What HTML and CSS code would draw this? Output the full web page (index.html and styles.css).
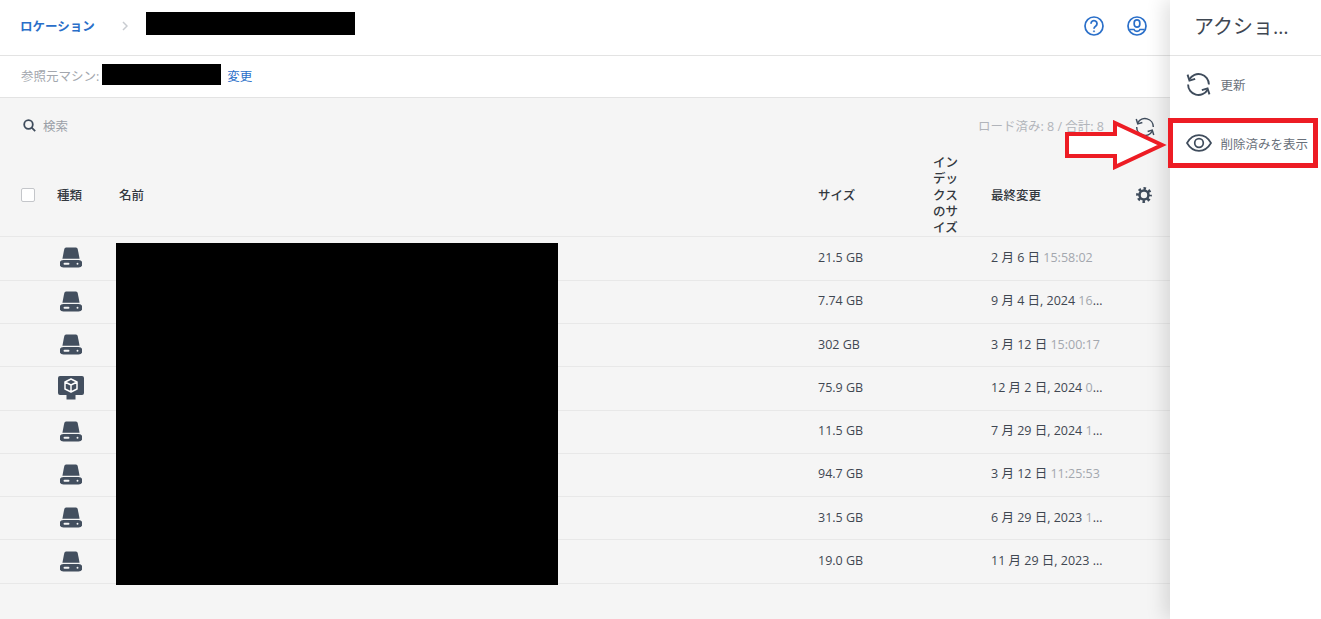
FILE: index.html
```html
<!DOCTYPE html>
<html lang="ja">
<head>
    <meta charset="utf-8">
    <title>ロケーション</title>
    <link rel="stylesheet" href="styles.css">
</head>
<body>
    <svg class="sprites" width="0" height="0">
        <symbol id="i-drive" viewBox="0 0 22 22">
            <path d="M4.300 2Q4.600.5 6 .5h10q1.400 0 1.700 1.500L19.600 11.700H2.400z"/>
            <path fill-rule="evenodd" d="M3.400 13h15.200a3.700 3.700 0 0 1 0 7.500H3.400a3.700 3.700 0 0 1 0-7.500zM4.500 15.800a.9.900 0 0 0 0 1.900h4a.9.900 0 0 0 0-1.900zm13 0a.9.900 0 1 0 0 1.900.9.900 0 0 0 0-1.900z"/>
        </symbol>
        <symbol id="i-vm" viewBox="0 0 26 24">
            <path d="M2 0h22a2 2 0 0 1 2 2v15a2 2 0 0 1-2 2h-6.500v4.500h-9V19H2a2 2 0 0 1-2-2V2a2 2 0 0 1 2-2z"/>
            <path d="M13 3l6 3v7l-6 3-6-3V6zM7 6l6 3 6-3M13 9v7" fill="none" stroke="#fff" stroke-width="1.500" stroke-linejoin="round"/>
        </symbol>
        <symbol id="i-sync" viewBox="0 0 24 24">
            <g fill="none" stroke="currentColor" stroke-width="1.800">
                <path d="M22 12A10 10 0 0 0 3.300 7"/>
                <path d="M1.500 2.500L3.300 8.300 8.800 6.500"/>
                <path d="M2 12A10 10 0 0 0 20.700 17"/>
                <path d="M22.500 21.500L20.700 15.700 15.200 17.500"/>
            </g>
        </symbol>
    </svg>

    <div class="main">
        <div class="topbar">
            <a class="crumb">ロケーション</a>
            <svg class="chevron" width="6" height="10" viewBox="0 0 6 10"><path d="M1 1l4 4-4 4" fill="none" stroke="#c9ccd1" stroke-width="1.500"/></svg>
            <span class="redact redact-crumb"></span>
            <div class="top-icons">
                <svg width="20" height="20" viewBox="0 0 20 20" fill="none" stroke="#2a6fc9" stroke-width="1.700">
                    <circle cx="10" cy="10" r="9"/>
                    <path d="M7 7.700a3 3 0 1 1 4.600 2.500c-1.100.7-1.600 1.200-1.600 2.500" stroke-width="1.800"/>
                    <circle cx="10" cy="15.300" r=".6" stroke-width="1"/>
                </svg>
                <svg width="20" height="20" viewBox="0 0 20 20" fill="none" stroke="#2a6fc9" stroke-width="1.700">
                    <circle cx="10" cy="10" r="9"/>
                    <rect x="7.200" y="3.900" width="5.600" height="7.200" rx="2.800"/>
                    <path d="M2.500 13.500h4.500c.5 1.300 1.500 1.800 3 1.800s2.500-.5 3-1.800h4.500"/>
                </svg>
            </div>
        </div>

        <div class="subbar">
            <span class="muted">参照元マシン:</span>
            <span class="redact redact-machine"></span>
            <a class="link">変更</a>
        </div>

        <div class="toolbar">
            <svg width="13" height="13" viewBox="0 0 13 13" fill="none" stroke="#3f4c5c" stroke-width="1.800"><circle cx="5.500" cy="5.500" r="4.300"/><path d="M8.700 8.700l3.500 3.500"/></svg>
            <span class="search-label">検索</span>
            <span class="loaded">ロード済み: 8 / 合計: 8</span>
            <svg class="sync-small"><use href="#i-sync"/></svg>
        </div>

        <div class="table">
            <div class="row head">
                <div class="cell"><span class="checkbox"></span></div>
                <div class="cell">種類</div>
                <div class="cell">名前</div>
                <div class="cell">サイズ</div>
                <div class="cell cell-index">インデックスのサイズ</div>
                <div class="cell">最終変更</div>
                <div class="cell">
                    <svg class="gear" width="16" height="16" viewBox="0 0 16 16" fill="none" stroke="#3f4c5c">
                        <circle cx="8" cy="8" r="4.500" stroke-width="2.600"/>
                        <circle cx="8" cy="8" r="6.400" stroke-width="3" stroke-dasharray="2.500 2.527" stroke-dashoffset="1.250"/>
                    </svg>
                </div>
            </div>

            <div class="row">
                <div class="cell"></div>
                <div class="cell"><svg class="kind"><use href="#i-drive"/></svg></div>
                <div class="cell"></div>
                <div class="cell">21.5 GB</div>
                <div class="cell"></div>
                <div class="cell"><span class="date">2 月 6 日 <span class="time">15:58:02</span></span></div>
            </div>
            <div class="row">
                <div class="cell"></div>
                <div class="cell"><svg class="kind"><use href="#i-drive"/></svg></div>
                <div class="cell"></div>
                <div class="cell">7.74 GB</div>
                <div class="cell"></div>
                <div class="cell"><span class="date">9 月 4 日, 2024 <span class="time">16:20:41</span></span></div>
            </div>
            <div class="row">
                <div class="cell"></div>
                <div class="cell"><svg class="kind"><use href="#i-drive"/></svg></div>
                <div class="cell"></div>
                <div class="cell">302 GB</div>
                <div class="cell"></div>
                <div class="cell"><span class="date">3 月 12 日 <span class="time">15:00:17</span></span></div>
            </div>
            <div class="row">
                <div class="cell"></div>
                <div class="cell"><svg class="kind kind-vm"><use href="#i-vm"/></svg></div>
                <div class="cell"></div>
                <div class="cell">75.9 GB</div>
                <div class="cell"></div>
                <div class="cell"><span class="date">12 月 2 日, 2024 <span class="time">09:12:33</span></span></div>
            </div>
            <div class="row">
                <div class="cell"></div>
                <div class="cell"><svg class="kind"><use href="#i-drive"/></svg></div>
                <div class="cell"></div>
                <div class="cell">11.5 GB</div>
                <div class="cell"></div>
                <div class="cell"><span class="date">7 月 29 日, 2024 <span class="time">13:40:09</span></span></div>
            </div>
            <div class="row">
                <div class="cell"></div>
                <div class="cell"><svg class="kind"><use href="#i-drive"/></svg></div>
                <div class="cell"></div>
                <div class="cell">94.7 GB</div>
                <div class="cell"></div>
                <div class="cell"><span class="date">3 月 12 日 <span class="time">11:25:53</span></span></div>
            </div>
            <div class="row">
                <div class="cell"></div>
                <div class="cell"><svg class="kind"><use href="#i-drive"/></svg></div>
                <div class="cell"></div>
                <div class="cell">31.5 GB</div>
                <div class="cell"></div>
                <div class="cell"><span class="date">6 月 29 日, 2023 <span class="time">10:05:12</span></span></div>
            </div>
            <div class="row">
                <div class="cell"></div>
                <div class="cell"><svg class="kind"><use href="#i-drive"/></svg></div>
                <div class="cell"></div>
                <div class="cell">19.0 GB</div>
                <div class="cell"></div>
                <div class="cell"><span class="date">11 月 29 日, 2023 <span class="time">14:31:27</span></span></div>
            </div>

            <span class="redact redact-names"></span>
        </div>
    </div>

    <div class="side">
        <div class="side-title"><span>アクション</span></div>
        <div class="side-item side-refresh">
            <svg class="side-sync"><use href="#i-sync"/></svg>
            <span>更新</span>
        </div>
        <div class="side-item side-deleted">
            <svg width="26" height="18" viewBox="0 0 26 18" fill="none" stroke="#3f4c5c" stroke-width="1.700">
                <path d="M1 9C4 3.800 8 1.200 13 1.200S22 3.800 25 9c-3 5.200-7 7.800-12 7.800S4 14.200 1 9z"/>
                <circle cx="13" cy="9" r="4.300"/>
            </svg>
            <span>削除済みを表示</span>
        </div>
    </div>

    <!-- red annotation drawn on top of the screenshot -->
    <svg class="arrow" width="102" height="50" viewBox="0 0 102 50">
        <path d="M2 14H50V3L97 25 50 47V36H2z" fill="#fff" stroke="#ed1c24" stroke-width="4"/>
    </svg>
    <div class="highlight"></div>
</body>
</html>
```

FILE: styles.css
```css
* {
    box-sizing: border-box;
}

html, body {
    height: 100%;
}

body {
    margin: 0;
    display: flex;
    overflow: hidden;
    font-family: "Open Sans", "Noto Sans CJK JP", sans-serif;
    font-size: 12.5px;
    color: #3f4752;
    background: #f5f5f5;
}

.sprites {
    position: absolute;
}

.main {
    width: 1170px;
    flex-shrink: 0;
}

.redact {
    display: block;
    background: #000;
}

.muted {
    color: #a3a7ae;
}

.link,
.crumb {
    color: #2a6fc9;
}

.topbar {
    height: 56px;
    display: flex;
    align-items: center;
    padding: 0 0 4px 20px;
    background: #fff;
    border-bottom: 1px solid #e3e3e3;
}

.crumb {
    font-weight: 700;
}

.chevron {
    margin-left: 27px;
}

.redact-crumb {
    width: 209px;
    height: 23px;
    margin-left: 18px;
    margin-top: -5px;
}

.top-icons {
    margin-left: auto;
    margin-right: 23px;
    display: flex;
    gap: 23px;
}

.subbar {
    height: 42px;
    display: flex;
    align-items: center;
    padding: 0 0 2px 21px;
    background: #fff;
    border-bottom: 1px solid #e3e3e3;
}

.redact-machine {
    width: 119px;
    height: 21px;
    margin: -2px 6px 0 3px;
}

.toolbar {
    height: 55px;
    display: flex;
    align-items: center;
    padding: 0 15px 0 23px;
}

.search-label {
    margin-left: 7px;
    color: #9a9fa7;
}

.loaded {
    margin-left: auto;
    margin-right: 31px;
    color: #b1b4ba;
}

.sync-small {
    width: 20px;
    height: 20px;
    margin-top: 2px;
    color: #3f4c5c;
}

.table {
    position: relative;
}

.row {
    display: grid;
    grid-template-columns: 57px 62px 699px 115px 58px 145px 34px;
    height: 43.33px;
    padding-bottom: 2px;
    align-items: center;
    border-bottom: 1px solid #e8e8e8;
}

.row.head {
    height: 84.2px;
    padding-bottom: 0;
    font-weight: 500;
    color: #33383f;
}

.cell-index {
    width: 26px;
    padding-top: 2px;
    line-height: 16.3px;
}

.checkbox {
    display: block;
    width: 14px;
    height: 14px;
    margin-left: 21px;
    background: #fff;
    border: 1px solid #c4c6ca;
    border-radius: 2px;
}

.gear {
    display: block;
}

.kind {
    display: block;
    width: 22px;
    height: 22px;
    margin: 2px 0 0 3px;
    fill: #434f5f;
}

.kind-vm {
    width: 26px;
    height: 24px;
    margin-left: 1px;
}

.date {
    display: block;
    width: 113px;
    margin-top: -2px;
    white-space: nowrap;
    overflow: hidden;
    text-overflow: ellipsis;
}

.time {
    color: #a3a7ae;
}

.redact-names {
    position: absolute;
    left: 116px;
    top: 90px;
    width: 442px;
    height: 342px;
}

.side {
    flex: 1;
    position: relative;
    background: #fff;
    box-shadow: -6px 0 18px rgba(0, 0, 0, 0.12);
}

.side-title {
    height: 56px;
    padding: 11px 0 0 24px;
    border-bottom: 1px solid #e3e3e3;
    font-size: 20px;
    color: #3f4752;
}

.side-title span {
    display: block;
    width: 96px;
    white-space: nowrap;
    overflow: hidden;
    text-overflow: ellipsis;
}

.side-item {
    display: flex;
    align-items: center;
    gap: 8.500px;
    padding-left: 16px;
    color: #69707a;
}

.side-refresh {
    height: 57px;
    gap: 9.500px;
}

.side-deleted {
    height: 60px;
}

.side-sync {
    width: 25px;
    height: 25px;
    color: #3f4c5c;
}

.arrow {
    position: absolute;
    left: 1065px;
    top: 120px;
}

.highlight {
    position: absolute;
    left: 1168px;
    top: 118px;
    width: 150px;
    height: 50px;
    border: 5px solid #ed1c24;
}
```
